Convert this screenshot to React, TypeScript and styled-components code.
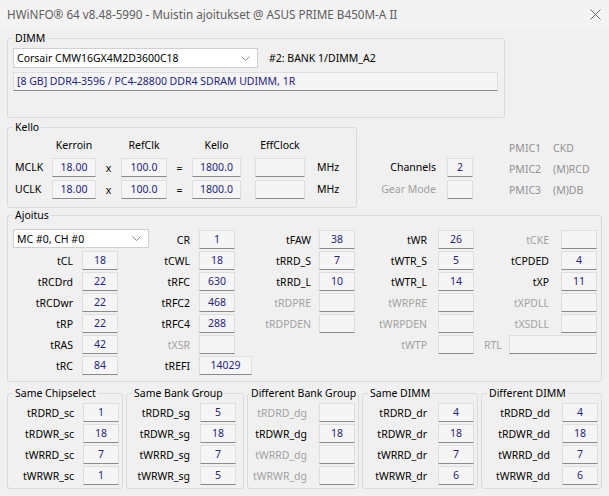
import React from 'react';
import styled, { createGlobalStyle } from 'styled-components';

const GlobalStyle = createGlobalStyle`
  html, body {
    margin: 0;
    padding: 0;
    background: #f0f0f0;
  }
  body {
    font-family: 'Segoe UI', 'Noto Sans', 'DejaVu Sans', sans-serif;
    font-size: 10.5px;
    color: #000;
  }
`;

const Window = styled.div`
  width: 609px;
  height: 496px;
  background: #f0f0f0;
  overflow: hidden;
`;

const TitleBar = styled.div`
  height: 30px;
  box-sizing: border-box;
  padding: 0 8px 2px 7px;
  display: flex;
  align-items: center;
  justify-content: space-between;
  background: #f3f3f3;
  color: #5e5e5e;
  font-size: 11.7px;
`;

const Content = styled.div`
  padding: 1px 7px 0 7px;
  display: flex;
  flex-direction: column;
`;

const Group = styled.fieldset<{ $w?: number; $h: number }>`
  box-sizing: border-box;
  margin: 0;
  padding: 0;
  min-width: 0;
  width: ${(p) => (p.$w ? `${p.$w}px` : 'auto')};
  height: ${(p) => p.$h}px;
  border: 1px solid #dadada;
  border-radius: 3px;
`;

const Legend = styled.legend<{ $tight?: boolean }>`
  margin-left: ${(p) => (p.$tight ? 1 : 5)}px;
  padding: 0 2px;
  line-height: 14px;
  color: #000;
  white-space: nowrap;
`;

const Combo = styled.div<{ $w: number; $h: number }>`
  box-sizing: border-box;
  width: ${(p) => p.$w}px;
  height: ${(p) => p.$h}px;
  background: #fff;
  border: 1px solid #cfcfcf;
  display: flex;
  align-items: center;
  justify-content: space-between;
  padding: 0 7px 0 3px;
  white-space: nowrap;
`;

const Value = styled.div<{ $w?: number; $end?: boolean }>`
  box-sizing: border-box;
  width: ${(p) => p.$w ?? 36}px;
  height: 19px;
  justify-self: ${(p) => (p.$end ? 'end' : 'auto')};
  background: #f5f5f5;
  border: 1px solid #dedede;
  border-bottom-color: #8a8a8a;
  color: #25257c;
  text-align: center;
  line-height: 17px;
  white-space: nowrap;
`;

const Label = styled.div<{ $dim?: boolean; $pr?: number }>`
  text-align: right;
  padding-right: ${(p) => p.$pr ?? 9}px;
  color: ${(p) => (p.$dim ? '#a2a2a2' : '#000')};
  white-space: nowrap;
`;

/* DIMM */
const DimmBody = styled.div`
  padding: 3px 5px 0 5px;
  display: flex;
  flex-direction: column;
  gap: 4px;
`;

const DimmRow = styled.div`
  display: flex;
  align-items: center;
  gap: 11px;
`;

const InfoField = styled.div`
  box-sizing: border-box;
  width: 485px;
  height: 19px;
  padding-left: 3px;
  background: #f5f5f5;
  border: 1px solid #dedede;
  border-bottom-color: #8a8a8a;
  color: #25257c;
  line-height: 17px;
`;

/* Kello row */
const ClockRow = styled.div`
  display: flex;
  align-items: flex-start;
  margin-top: 2px;
`;

const ClockGrid = styled.div`
  display: grid;
  grid-template-columns: 44px 44px 25px 46px 25px 49px 64px auto;
  grid-auto-rows: 22px;
  align-items: center;
`;

const ClockHead = styled.div<{ $pl?: number }>`
  text-align: center;
  padding-left: ${(p) => p.$pl ?? 0}px;
`;

const ClockName = styled.div`
  padding-left: 7px;
`;

const Op = styled.div`
  text-align: center;
  padding-top: 2px;
`;

const Unit = styled.div`
  padding-left: 12px;
`;

const SideInfo = styled.div`
  display: flex;
  align-items: flex-start;
  padding-top: 14px;
`;

const ChannelGrid = styled.div`
  display: grid;
  grid-template-columns: 90px 26px;
  grid-auto-rows: 22px;
  align-items: center;
`;

const PmicGrid = styled.div`
  display: grid;
  grid-template-columns: 44px auto;
  grid-auto-rows: 21px;
  align-items: center;
  margin: 3px 0 0 36px;
  color: #929292;
`;

/* Ajoitus */
const TimingGrid = styled.div`
  display: grid;
  grid-template-columns: 74px 36px 81px 36px 84px 36px 83px 36px 87px 36px;
  grid-auto-rows: 21px;
  align-items: center;
  padding-top: 7px;
`;

const TimingCombo = styled.div`
  grid-column: 1 / span 2;
  align-self: start;
  margin-left: 5px;
`;

const RtlCell = styled.div`
  grid-column: span 2;
  display: flex;
  align-items: center;
  padding-left: 10px;
  color: #a2a2a2;
  gap: 7px;
`;

/* Bottom groups */
const BottomRow = styled.div`
  display: grid;
  grid-template-columns: 116px 118px 112px 116px 121px;
  column-gap: 3px;
  margin-top: 4px;
`;

const PairGrid = styled.div<{ $pr: number }>`
  display: grid;
  grid-template-columns: 1fr 36px;
  grid-auto-rows: 21px;
  align-items: center;
  padding: 2px ${(p) => p.$pr}px 0 0;
`;

const Chevron = () => (
  <svg width="9" height="5" viewBox="0 0 9 5">
    <polyline points="0.5,0.5 4.5,4.5 8.5,0.5" fill="none" stroke="#8a8a8a" strokeWidth="1" />
  </svg>
);

const CloseIcon = () => (
  <svg width="11" height="11" viewBox="0 0 11 11">
    <path d="M0.5 0.5 L10.5 10.5 M10.5 0.5 L0.5 10.5" stroke="#6a6a6a" strokeWidth="1" />
  </svg>
);

type Cell = { l: string; v: string; dim?: boolean; w?: number } | null | 'rtl';

const padsByCol = [9, 9, 8, 11, 12];

const timingRows: Cell[][] = [
  [null, { l: 'CR', v: '1' }, { l: 'tFAW', v: '38' }, { l: 'tWR', v: '26' }, { l: 'tCKE', v: '', dim: true }],
  [{ l: 'tCL', v: '18' }, { l: 'tCWL', v: '18' }, { l: 'tRRD_S', v: '7' }, { l: 'tWTR_S', v: '5' }, { l: 'tCPDED', v: '4' }],
  [{ l: 'tRCDrd', v: '22' }, { l: 'tRFC', v: '630' }, { l: 'tRRD_L', v: '10' }, { l: 'tWTR_L', v: '14' }, { l: 'tXP', v: '11' }],
  [{ l: 'tRCDwr', v: '22' }, { l: 'tRFC2', v: '468' }, { l: 'tRDPRE', v: '', dim: true }, { l: 'tWRPRE', v: '', dim: true }, { l: 'tXPDLL', v: '', dim: true }],
  [{ l: 'tRP', v: '22' }, { l: 'tRFC4', v: '288' }, { l: 'tRDPDEN', v: '', dim: true }, { l: 'tWRPDEN', v: '', dim: true }, { l: 'tXSDLL', v: '', dim: true }],
  [{ l: 'tRAS', v: '42' }, { l: 'tXSR', v: '', dim: true }, null, { l: 'tWTP', v: '', dim: true }, 'rtl'],
  [{ l: 'tRC', v: '84' }, { l: 'tREFI', v: '14029', w: 53 }, null, null, null],
];

type Pair = { l: string; v: string; dim?: boolean };

const bottomGroups: { title: string; pr: number; lpr: number; tight?: boolean; rows: Pair[] }[] = [
  {
    title: 'Same Chipselect', pr: 3, lpr: 9,
    rows: [{ l: 'tRDRD_sc', v: '1' }, { l: 'tRDWR_sc', v: '18' }, { l: 'tWRRD_sc', v: '7' }, { l: 'tWRWR_sc', v: '1' }],
  },
  {
    title: 'Same Bank Group', pr: 7, lpr: 10,
    rows: [{ l: 'tRDRD_sg', v: '5' }, { l: 'tRDWR_sg', v: '18' }, { l: 'tWRRD_sg', v: '7' }, { l: 'tWRWR_sg', v: '5' }],
  },
  {
    title: 'Different Bank Group', pr: 3, lpr: 12, tight: true,
    rows: [
      { l: 'tRDRD_dg', v: '', dim: true },
      { l: 'tRDWR_dg', v: '18' },
      { l: 'tWRRD_dg', v: '', dim: true },
      { l: 'tWRWR_dg', v: '', dim: true },
    ],
  },
  {
    title: 'Same DIMM', pr: 3, lpr: 11,
    rows: [{ l: 'tRDRD_dr', v: '4' }, { l: 'tRDWR_dr', v: '18' }, { l: 'tWRRD_dr', v: '7' }, { l: 'tWRWR_dr', v: '6' }],
  },
  {
    title: 'Different DIMM', pr: 3, lpr: 12,
    rows: [{ l: 'tRDRD_dd', v: '4' }, { l: 'tRDWR_dd', v: '18' }, { l: 'tWRRD_dd', v: '7' }, { l: 'tWRWR_dd', v: '6' }],
  },
];

const clocks = [
  { name: 'MCLK', mult: '18.00', ref: '100.0', clk: '1800.0' },
  { name: 'UCLK', mult: '18.00', ref: '100.0', clk: '1800.0' },
];

export default function App() {
  return (
    <Window>
      <GlobalStyle />
      <TitleBar>
        <span>HWiNFO® 64 v8.48-5990 - Muistin ajoitukset @ ASUS PRIME B450M-A II</span>
        <CloseIcon />
      </TitleBar>

      <Content>
        <Group $w={498} $h={87}>
          <Legend>DIMM</Legend>
          <DimmBody>
            <DimmRow>
              <Combo $w={245} $h={20}>
                <span>Corsair CMW16GX4M2D3600C18</span>
                <Chevron />
              </Combo>
              <span>#2: BANK 1/DIMM_A2</span>
            </DimmRow>
            <InfoField>[8 GB] DDR4-3596 / PC4-28800 DDR4 SDRAM UDIMM, 1R</InfoField>
          </DimmBody>
        </Group>

        <ClockRow>
          <Group $w={350} $h={88}>
            <Legend>Kello</Legend>
            <ClockGrid>
              <div />
              <ClockHead>Kerroin</ClockHead>
              <div />
              <ClockHead>RefClk</ClockHead>
              <div />
              <ClockHead>Kello</ClockHead>
              <ClockHead $pl={14}>EffClock</ClockHead>
              <div />
              {clocks.map((c) => (
                <React.Fragment key={c.name}>
                  <ClockName>{c.name}</ClockName>
                  <Value $w={44}>{c.mult}</Value>
                  <Op>x</Op>
                  <Value $w={46}>{c.ref}</Value>
                  <Op>=</Op>
                  <Value $w={49}>{c.clk}</Value>
                  <Value $w={50} $end />
                  <Unit>MHz</Unit>
                </React.Fragment>
              ))}
            </ClockGrid>
          </Group>

          <SideInfo>
            <ChannelGrid>
              <div />
              <div />
              <Label $pr={11}>Channels</Label>
              <Value $w={26}>2</Value>
              <Label $pr={11} $dim>
                Gear Mode
              </Label>
              <Value $w={26} />
            </ChannelGrid>
            <PmicGrid>
              <span>PMIC1</span>
              <span>CKD</span>
              <span>PMIC2</span>
              <span>(M)RCD</span>
              <span>PMIC3</span>
              <span>(M)DB</span>
            </PmicGrid>
          </SideInfo>
        </ClockRow>

        <Group $w={595} $h={174}>
          <Legend>Ajoitus</Legend>
          <TimingGrid>
            {timingRows.map((row, r) =>
              row.map((cell, c) => {
                const key = `${r}-${c}`;
                if (r === 0 && c === 0) {
                  return (
                    <TimingCombo key={key}>
                      <Combo $w={136} $h={19}>
                        <span>MC #0, CH #0</span>
                        <Chevron />
                      </Combo>
                    </TimingCombo>
                  );
                }
                if (cell === 'rtl') {
                  return (
                    <RtlCell key={key}>
                      RTL
                      <Value $w={89} />
                    </RtlCell>
                  );
                }
                if (cell === null) {
                  return (
                    <React.Fragment key={key}>
                      <div />
                      <div />
                    </React.Fragment>
                  );
                }
                return (
                  <React.Fragment key={key}>
                    <Label $dim={cell.dim} $pr={padsByCol[c]}>
                      {cell.l}
                    </Label>
                    <Value $w={cell.w}>{cell.v}</Value>
                  </React.Fragment>
                );
              })
            )}
          </TimingGrid>
        </Group>

        <BottomRow>
          {bottomGroups.map((g) => (
            <Group key={g.title} $h={103}>
              <Legend $tight={g.tight}>{g.title}</Legend>
              <PairGrid $pr={g.pr}>
                {g.rows.map((p) => (
                  <React.Fragment key={p.l}>
                    <Label $dim={p.dim} $pr={g.lpr}>
                      {p.l}
                    </Label>
                    <Value>{p.v}</Value>
                  </React.Fragment>
                ))}
              </PairGrid>
            </Group>
          ))}
        </BottomRow>
      </Content>
    </Window>
  );
}
